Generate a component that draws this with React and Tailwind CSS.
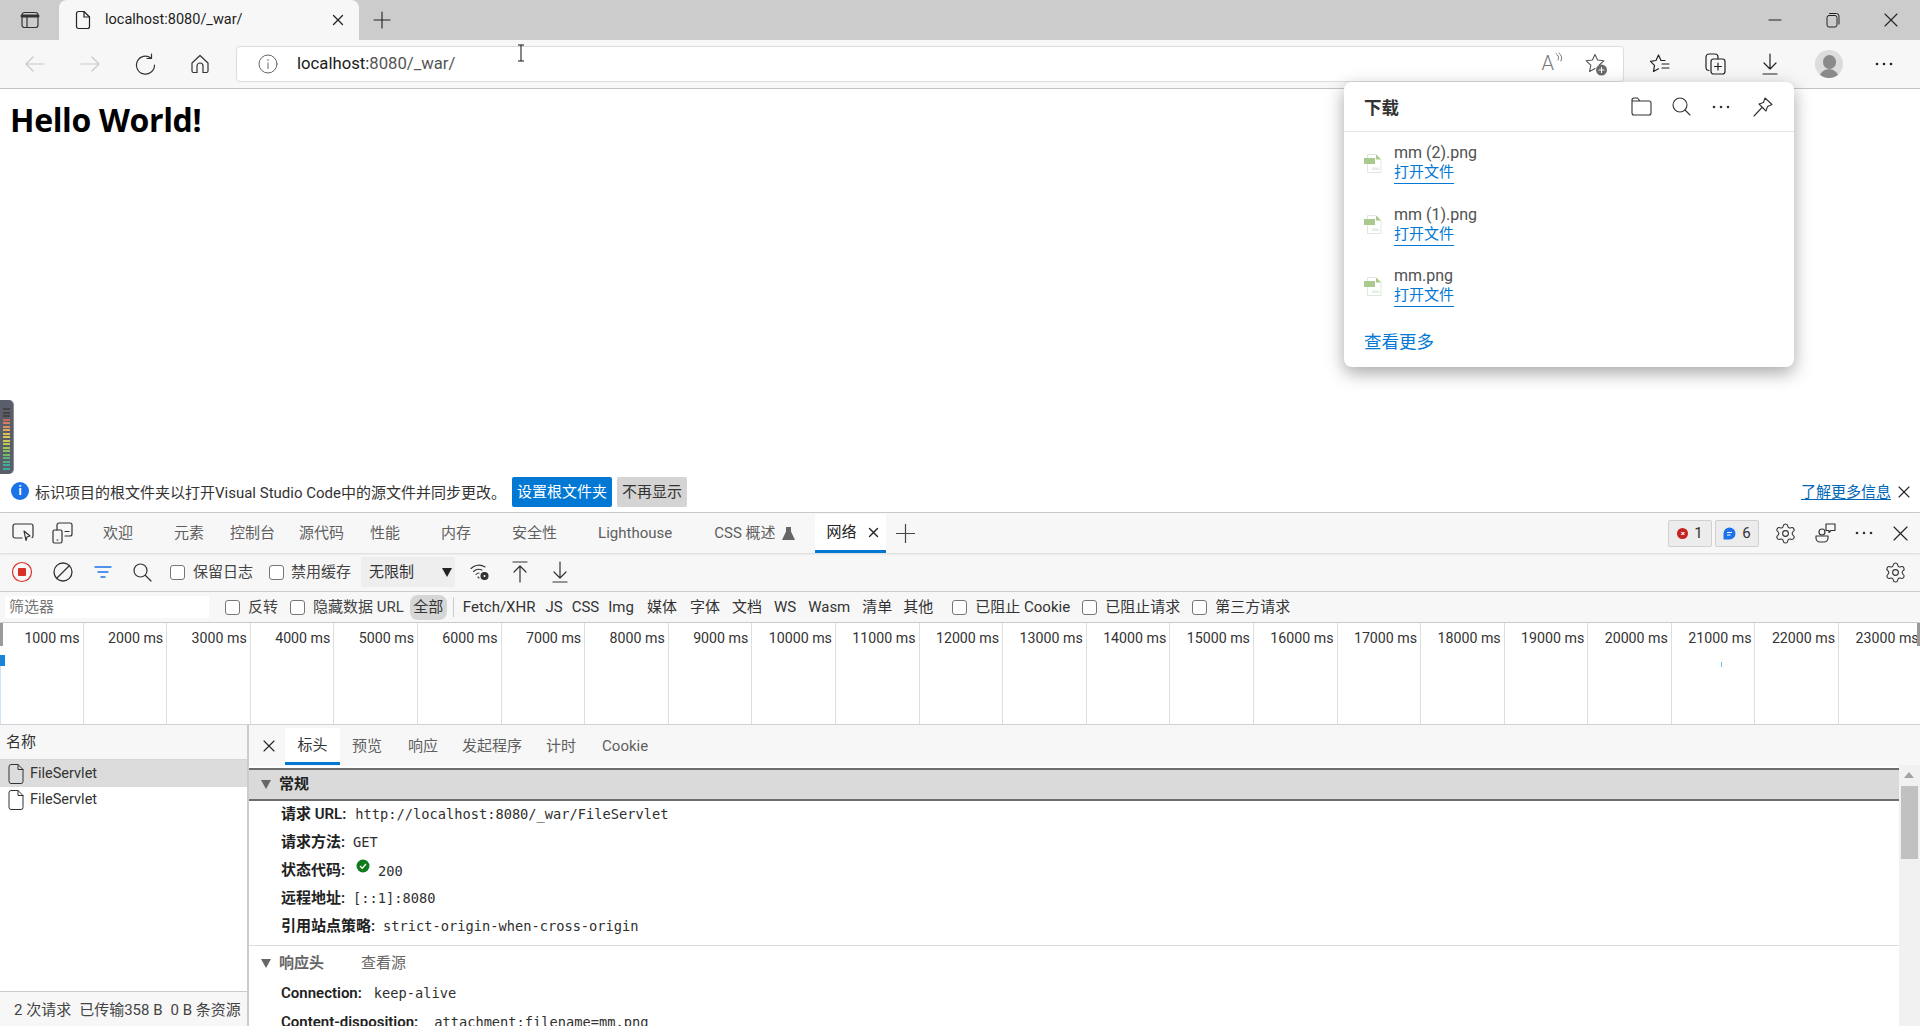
import React from "react";
import { Settings } from "lucide-react";

const S = ({ w = 20, h = 20, vb = "0 0 20 20", c = "#333", sw = 1.2, className = "", children }) => (
  <svg width={w} height={h} viewBox={vb} fill="none" stroke={c} strokeWidth={sw} strokeLinecap="round" strokeLinejoin="round" className={"shrink-0 " + className}>{children}</svg>
);

const Cb = ({ className = "" }) => <span className={"inline-block shrink-0 w-[15px] h-[15px] rounded-[3px] border border-[#767676] bg-white " + className} />;

const PngIcon = () => (
  <svg width="18" height="19" viewBox="0 0 18 19" className="shrink-0">
    <path d="M3.5 .5H12L17 5.5V18.500H3.500Z" fill="#fff" stroke="#dfe8da" />
    <path d="M12 .5V5.500H17Z" fill="#a9c98e" />
    <rect x="0" y="4" width="11" height="6" fill="#a9c98e" />
    <path d="M7 16L10 12.500L12 14L14 13L16 16Z" fill="#e3efe6" />
  </svg>
);

const Dots = ({ c = "#333" }) => (
  <svg width="18" height="4" viewBox="0 0 18 4" className="shrink-0"><circle cx="2" cy="2" r="1.300" fill={c} /><circle cx="9" cy="2" r="1.300" fill={c} /><circle cx="16" cy="2" r="1.300" fill={c} /></svg>
);

const downloads = [
  { name: "mm (2).png", cls: "h-[62px]" },
  { name: "mm (1).png", cls: "h-[61px]" },
  { name: "mm.png", cls: "h-[62px]" },
];

const devTabs = [
  ["欢迎", "ml-[30px]"], ["元素", "ml-[41px]"], ["控制台", "ml-[26px]"], ["源代码", "ml-[24px]"], ["性能", "ml-[26px]"], ["内存", "ml-[41px]"], ["安全性", "ml-[41px]"], ["Lighthouse", "ml-[41px]"],
];

const filters = [["Fetch/XHR", "ml-[9px]"], ["JS", "ml-[10px]"], ["CSS", "ml-[9px]"], ["Img", "ml-[9px]"], ["媒体", "ml-[13px]"], ["字体", "ml-[13px]"], ["文档", "ml-[12px]"], ["WS", "ml-[12px]"], ["Wasm", "ml-[12px]"], ["清单", "ml-[12px]"], ["其他", "ml-[11px]"]];

const ticks = Array.from({ length: 23 }, (_, i) => (i + 1) * 1000);

const Row = ({ label, children, className = "", gap = "mr-[8px]" }) => (
  <div className={"flex items-center h-[28px] pl-[281px] " + className}>
    <span className={"font-semibold text-[#222] " + gap}>{label}</span>
    <span className="font-['DejaVu_Sans_Mono',monospace] text-[13.700px] text-[#303030]">{children}</span>
  </div>
);

const Tri = () => <span className="inline-block w-0 h-0 border-l-[5.500px] border-r-[5.500px] border-t-[9px] border-l-transparent border-r-transparent border-t-[#666]" />;

export default function App() {
  return (
    <div className="relative w-[1920px] h-[1026px] overflow-hidden flex flex-col bg-white text-[15px] text-[#303030] font-['Roboto','Noto_Sans_CJK_SC',sans-serif]">
      {/* tab strip */}
      <div className="h-10 shrink-0 bg-[#cccccc] flex items-stretch">
        <div className="w-[59px] flex items-center justify-center">
          <S w={20} h={20}><rect x="2" y="2.500" width="16" height="15" rx="2.500" /><path d="M2 6H18" strokeWidth="3" /><path d="M7 6V17" /></S>
        </div>
        <div className="w-[300px] bg-[#f7f7f7] rounded-t-[8px] flex items-center pl-[16px] pr-[8px]">
          <S w={16} h={20} vb="0 0 16 20" c="#222"><path d="M1.500 3.500a2 2 0 0 1 2-2H9L14.500 7V16.500a2 2 0 0 1-2 2h-9a2 2 0 0 1-2-2Z" /><path d="M9 1.500V7H14.500" /></S>
          <span className="ml-[14px] text-[14.500px] text-[#1d1d1d]">localhost:8080/_war/</span>
          <S w={12} h={12} vb="0 0 12 12" c="#222" sw={1.300} className="ml-auto mr-[7px]"><path d="M1.500 1.500L10.500 10.500M10.500 1.500L1.500 10.500" /></S>
        </div>
        <div className="ml-[14px] flex items-center">
          <S w={18} h={18} vb="0 0 18 18" c="#222" sw={1.100}><path d="M9 1V17M1 9H17" /></S>
        </div>
        <div className="ml-auto flex items-center">
          <S w={14} h={14} vb="0 0 14 14" c="#222" sw={1}><path d="M1 7H13" /></S>
          <S w={14} h={16} vb="0 0 14 16" c="#222" sw={1} className="ml-[44px]"><rect x="1" y="3.500" width="10" height="11.500" rx="2" /><path d="M3.500 1.500H10.500a2.500 2.500 0 0 1 2.500 2.500V12" /></S>
          <S w={14} h={14} vb="0 0 14 14" c="#222" sw={1.100} className="ml-[44px] mr-[22px]"><path d="M1 1L13 13M13 1L1 13" /></S>
        </div>
      </div>

      {/* toolbar */}
      <div className="h-[49px] shrink-0 bg-[#f7f7f7] border-b border-[#c4c4c4] flex items-center">
        <S w={20} h={18} vb="0 0 20 18" c="#c8c8c8" className="ml-[25px]"><path d="M1 9H19M1 9L8 2M1 9L8 16" /></S>
        <S w={20} h={18} vb="0 0 20 18" c="#c8c8c8" className="ml-[35px]"><path d="M1 9H19M19 9L12 2M19 9L12 16" /></S>
        <S w={21} h={22} vb="0 0 21 22" c="#333" sw={1.200} className="ml-[35px]"><path d="M16 5A9 9 0 1 0 19.500 12" /><path d="M16.500 1V5.500H12" /></S>
        <S w={20} h={20} vb="0 0 20 20" c="#333" sw={1.200} className="ml-[34px]"><path d="M2 9L10 1.500L18 9V17a1.500 1.500 0 0 1-1.500 1.500H13V12a3 3 0 0 0-6 0V18.500H3.500A1.500 1.500 0 0 1 2 17Z" /></S>
        <div className="ml-[26px] w-[1388px] h-[36px] bg-white rounded-[4px] border border-[#dcdcdc] flex items-center shrink-0">
          <S w={20} h={20} vb="0 0 20 20" c="#666" sw={1} className="ml-[21px]"><circle cx="10" cy="10" r="9" /><path d="M10 9V14.500M10 5.500V6.500" /></S>
          <span className="ml-[19px] text-[16.700px] text-[#555]"><span className="text-[#1a1a1a]">localhost:</span>8080/_war/</span>
          <span className="ml-auto text-[20px] leading-none text-[#777] font-light -mt-[2px]">A</span>
          <S w={10} h={16} vb="0 0 10 16" c="#777" sw={1} className="-mt-[8px]"><path d="M2 1.500Q6 4.500 4 8M5 1Q9 4 7 9" /></S>
          <S w={24} h={24} vb="0 0 24 24" c="#555" sw={1.100} className="ml-[20px] mr-[15px]"><path d="M15.300 13L19.800 8.800L13.600 8L11 2.500L8.400 8L2.200 8.800L6.800 13.200L5.600 19.500L11 16.600" /><circle cx="17.500" cy="18" r="5.500" fill="#6b6b6b" stroke="none" /><path d="M17.500 15.500V20.500M15 18H20" stroke="#fff" /></S>
        </div>
        <S w={22} h={22} vb="0 0 22 22" c="#222" sw={1.200} className="ml-[25px]"><path d="M16 7.500H12L9.500 2L7 7.500L1.500 8.300L5.500 12.300L4.500 18.500L9.500 15.800" /><path d="M13 11H20M13 15H20" /></S>
        <S w={22} h={24} vb="0 0 22 24" c="#222" sw={1.200} className="ml-[33px]"><rect x="7" y="7" width="14" height="15" rx="2.500" /><path d="M14 11V18M10.500 14.500H17.500" /><path d="M5 18.500A3 3 0 0 1 2 16V5A3 3 0 0 1 5 2H11A3 3 0 0 1 14 5V7" /></S>
        <S w={16} h={24} vb="0 0 16 24" c="#222" sw={1.200} className="ml-[36px]"><path d="M8 2V17M2 11L8 17L14 11M1 22H15" /></S>
        <div className="ml-[37px] w-[28px] h-[28px] rounded-full bg-[#dcdcdc] overflow-hidden relative shrink-0">
          <span className="absolute left-[7.500px] top-[5px] w-[13px] h-[14px] rounded-full bg-[#8a8a8a]" />
          <span className="absolute left-[4px] top-[19px] w-[20px] h-[14px] rounded-t-[10px] bg-[#8a8a8a]" />
        </div>
        <div className="ml-[32px]"><Dots c="#222" /></div>
      </div>

      {/* page */}
      <div className="h-[423px] shrink-0 flex flex-col bg-white">
        <div className="flex-1 min-h-0">
          <h1 className="ml-[10px] mt-[9px] text-[32px] leading-[44px] font-bold text-black font-['Open_Sans',sans-serif] tracking-[-0.350px]">Hello World!</h1>
        </div>
        <div className="h-[35px] shrink-0 flex items-start">
          <span className="ml-[11px] mt-[5px] w-[18px] h-[18px] rounded-full bg-[#1a73e8] flex items-center justify-center text-white text-[12px] font-bold leading-none">i</span>
          <span className="ml-[6px] mt-[5px] text-[15px] leading-[22px] text-[#333]">标识项目的根文件夹以打开Visual Studio Code中的源文件并同步更改。</span>
          <span className="absolute left-[512px] top-[477px] w-[100px] h-[30px] bg-[#0078d4] rounded-[2px] text-white flex items-center justify-center">设置根文件夹</span>
          <span className="absolute left-[617px] top-[477px] w-[70px] h-[30px] bg-[#d4d4d4] rounded-[2px] text-[#333] flex items-center justify-center">不再显示</span>
          <span className="ml-auto mt-[4px] text-[#0067b8] underline underline-offset-2 text-[15px]">了解更多信息</span>
          <S w={12} h={12} vb="0 0 12 12" c="#222" sw={1.100} className="ml-[7px] mr-[10px] mt-[9px]"><path d="M1 1L11 11M11 1L1 11" /></S>
        </div>
      </div>

      {/* devtools */}
      <div className="flex-1 min-h-0 flex flex-col bg-[#f7f7f7] border-t border-[#cbcbcb] text-[#444]">
        <div className="h-[40px] shrink-0 flex items-center shadow-[0_1px_2px_rgba(0,0,0,0.12)] relative">
          <S w={22} h={20} vb="0 0 22 20" c="#333" sw={1.200} className="ml-[12px]"><path d="M10 15H3a2 2 0 0 1-2-2V3a2 2 0 0 1 2-2H19a2 2 0 0 1 2 2V13a2 2 0 0 1-1 1.700" /><path d="M12 8L18 13L15 14L14 17.500Z" /></S>
          <S w={21} h={22} vb="0 0 21 22" c="#333" sw={1.200} className="ml-[18px]"><rect x="1" y="8" width="9" height="13" rx="1.500" /><path d="M5 8V3a2 2 0 0 1 2-2H18a2 2 0 0 1 2 2V12a2 2 0 0 1-2 2H13M13 9.500H17M5 18H6" /></S>
          {devTabs.map(([t, m]) => <span key={t} className={"text-[#5f5f5f] " + m}>{t}</span>)}
          <span className="ml-[42px] text-[#5f5f5f]">CSS 概述</span>
          <svg width="13" height="15" viewBox="0 0 13 15" className="ml-[6px] shrink-0"><path d="M4 1H9V5.500L13 14H0L4 5.500Z" fill="#666" /></svg>
          <div className="ml-[20px] w-[71px] h-[39px] mt-[1px] bg-white border-b-[3px] border-[#0078d4] flex items-center pl-[12px]">
            <span className="text-[#222]">网络</span>
            <S w={11} h={11} vb="0 0 11 11" c="#222" sw={1.400} className="ml-[11px]"><path d="M1.500 1.500L9.500 9.500M9.500 1.500L1.500 9.500" /></S>
          </div>
          <S w={19} h={19} vb="0 0 19 19" c="#444" sw={1.200} className="ml-[10px]"><path d="M9.500 0V19M0 9.500H19" /></S>
          <div className="ml-auto h-[27px] w-[44px] bg-[#ececec] border border-[#d0d0d0] rounded-[2px] flex items-center justify-center gap-[6px]">
            <span className="w-[11px] h-[11px] rounded-full bg-[#c5221f] text-white text-[8px] leading-[11px] text-center font-bold">×</span><span className="text-[#333]">1</span>
          </div>
          <div className="ml-[3px] h-[27px] w-[44px] bg-[#ececec] border border-[#d0d0d0] rounded-[2px] flex items-center justify-center gap-[6px]">
            <svg width="13" height="13" viewBox="0 0 13 13" className="shrink-0"><path d="M6.500 0.500A6 6 0 1 1 6.500 12.500H0.500V6.500A6 6 0 0 1 6.500 0.500Z" fill="#1a73e8" /><path d="M4 5.500H9M4 8H7.500" stroke="#fff" /></svg><span className="text-[#333]">6</span>
          </div>
          <Settings size={23} strokeWidth={1.150} color="#333" className="ml-[15px] shrink-0" />
          <S w={21} h={20} vb="0 0 21 20" c="#333" sw={1.150} className="ml-[18px]"><circle cx="7" cy="9" r="3" /><path d="M1 13H13V15A4 4 0 0 1 9 19H5A4 4 0 0 1 1 15Z" /><path d="M11 1H20V7.500H16L14 9.500V7.500H11Z" /></S>
          <div className="ml-[19px]"><Dots c="#333" /></div>
          <S w={15} h={15} vb="0 0 15 15" c="#222" sw={1.150} className="ml-[20px] mr-[12px]"><path d="M1 1L14 14M14 1L1 14" /></S>
        </div>
        <div className="h-[39px] shrink-0 flex items-center border-b border-[#cbcbcb]">
          <svg width="22" height="22" viewBox="0 0 22 22" className="ml-[11px] shrink-0"><circle cx="11" cy="11" r="9.500" fill="none" stroke="#d93025" strokeWidth="1.200" /><rect x="7" y="7" width="8" height="8" rx="1" fill="#d93025" /></svg>
          <S w={20} h={20} vb="0 0 20 20" c="#333" sw={1.300} className="ml-[20px]"><circle cx="10" cy="10" r="9" /><path d="M3.500 16.500L16.500 3.500" /></S>
          <S w={18} h={14} vb="0 0 18 14" c="#1a73e8" sw={1.300} className="ml-[21px]"><path d="M1 2H17M4 7H14M7 12H11" /></S>
          <S w={19} h={19} vb="0 0 19 19" c="#333" sw={1.200} className="ml-[21px]"><circle cx="7.500" cy="7.500" r="6.500" /><path d="M12.500 12.500L18 18" /></S>
          <Cb className="ml-[18px]" /><span className="ml-[8px]">保留日志</span>
          <Cb className="ml-[16px]" /><span className="ml-[7px]">禁用缓存</span>
          <div className="ml-[10px] w-[94px] h-[30px] bg-[#eeeeee] flex items-center pl-[8px]">
            <span className="text-[#333]">无限制</span>
            <span className="ml-[28px] w-0 h-0 border-l-[5.500px] border-r-[5.500px] border-t-[9px] border-l-transparent border-r-transparent border-t-[#222]" />
          </div>
          <S w={20} h={20} vb="0 0 20 20" c="#333" sw={1.100} className="ml-[15px]"><path d="M1 6.500A11 11 0 0 1 15 5M3.500 9.500A8 8 0 0 1 12 8M6 12.500A4 4 0 0 1 9 11M8 15L9 16" /><circle cx="14.500" cy="14" r="3.500" fill="#333" /><circle cx="14.500" cy="14" r="1" fill="#fff" stroke="none" /></S>
          <S w={16} h={22} vb="0 0 16 22" c="#333" sw={1.200} className="ml-[22px]"><path d="M1 1H15M8 21V5M2 11L8 5L14 11" /></S>
          <S w={16} h={22} vb="0 0 16 22" c="#333" sw={1.200} className="ml-[24px]"><path d="M1 21H15M8 1V17M2 11L8 17L14 11" /></S>
          <Settings size={23} strokeWidth={1.150} color="#333" className="ml-auto mr-[13px] shrink-0" />
        </div>
        <div className="h-[31px] shrink-0 flex items-center border-b border-[#cbcbcb] leading-[24px]">
          <div className="ml-[5px] w-[204px] h-[22px] bg-white text-[#757575] pl-[4px] leading-[22px]">筛选器</div>
          <Cb className="ml-[16px]" /><span className="ml-[8px]">反转</span>
          <Cb className="ml-[12px]" /><span className="ml-[8px]">隐藏数据 URL</span>
          <span className="ml-[6px] w-[37px] h-[25px] rounded-[8px] bg-[#d6d6d6] text-center leading-[25px] text-[#333]">全部</span>
          <span className="ml-[6px] w-px h-[20px] bg-[#cccccc]" />
          {filters.map(([t, m]) => <span key={t} className={"text-[#333] " + m}>{t}</span>)}
          <Cb className="ml-[19px]" /><span className="ml-[8px] text-[#333]">已阻止 Cookie</span>
          <Cb className="ml-[12px]" /><span className="ml-[8px] text-[#333]">已阻止请求</span>
          <Cb className="ml-[12px]" /><span className="ml-[8px] text-[#333]">第三方请求</span>
        </div>
        {/* overview */}
        <div className="h-[102px] shrink-0 bg-white border-b border-[#cfcfd6] flex relative overflow-hidden">
          {ticks.map((t) => (
            <div key={t} className="w-[83.600px] shrink-0 border-r border-[#dedede] pr-[3px] pt-[5px] text-right text-[14.200px] leading-[20px] text-[#333] whitespace-nowrap">{t} ms</div>
          ))}
          <span className="absolute left-0 top-0 w-[3px] h-[23px] bg-[#9a9a9a]" />
          <span className="absolute left-0 top-[32px] w-[5px] h-[11px] bg-[#1a84d8]" />
          <span className="absolute left-0 top-[43px] w-px h-[58px] bg-[#cfe4f5]" />
          <span className="absolute left-[1721px] top-[39px] w-px h-[5px] bg-[#5cc4e8]" />
          <span className="absolute right-0 top-0 w-[3px] h-[23px] bg-[#9a9a9a]" />
        </div>
        {/* main */}
        <div className="flex-1 min-h-0 flex">
          <div className="w-[249px] shrink-0 flex flex-col bg-white border-r-[2px] border-[#cbcbd2]">
            <div className="h-[35px] shrink-0 bg-[#f7f7f7] flex items-center pl-[6px] border-b border-[#d6d6d6] text-[#333]">名称</div>
            <div className="h-[27px] shrink-0 bg-[#dcdcdc] flex items-center pl-[8px]">
              <S w={16} h={20} vb="0 0 16 20" c="#333" sw={1}><path d="M1 2.500a2 2 0 0 1 2-2H10L15 5.500V17.500a2 2 0 0 1-2 2H3a2 2 0 0 1-2-2Z" /><path d="M10 .5V5.500H15" /></S>
              <span className="ml-[6px] text-[#333] text-[14.500px]">FileServlet</span>
            </div>
            <div className="h-[26px] shrink-0 flex items-center pl-[8px]">
              <S w={16} h={20} vb="0 0 16 20" c="#333" sw={1}><path d="M1 2.500a2 2 0 0 1 2-2H10L15 5.500V17.500a2 2 0 0 1-2 2H3a2 2 0 0 1-2-2Z" /><path d="M10 .5V5.500H15" /></S>
              <span className="ml-[6px] text-[#333] text-[14.500px]">FileServlet</span>
            </div>
            <div className="flex-1" />
            <div className="h-[35px] shrink-0 bg-[#f7f7f7] border-t border-[#cbcbcb] flex items-center pl-[14px] pt-[3px] text-[#444] whitespace-nowrap text-[15px]">2 次请求<span className="ml-[8px]">已传输358 B</span><span className="ml-[8px]">0 B 条资源</span></div>
          </div>
          <div className="flex-1 min-w-0 flex flex-col relative">
            <div className="h-[41px] shrink-0 flex items-center">
              <S w={12} h={12} vb="0 0 12 12" c="#222" sw={1.100} className="ml-[14px]"><path d="M1 1L11 11M11 1L1 11" /></S>
              <div className="ml-[10px] w-[55px] h-[37px] mt-[2px] bg-white border-b-[3px] border-[#0078d4] flex items-center justify-center text-[#333]">标头</div>
              <span className="ml-[12px] mt-[2px] text-[#5f5f5f]">预览</span>
              <span className="ml-[26px] mt-[2px] text-[#5f5f5f]">响应</span>
              <span className="ml-[24px] mt-[2px] text-[#5f5f5f]">发起程序</span>
              <span className="ml-[24px] mt-[2px] text-[#5f5f5f]">计时</span>
              <span className="ml-[26px] mt-[2px] text-[#5f5f5f]">Cookie</span>
            </div>
            <div className="flex-1 min-h-0 flex bg-white">
              <div className="flex-1 min-w-0 overflow-hidden">
                <div className="mt-[2px] h-[33px] bg-[#dadada] border-y-[2px] border-[#6e6e6e] flex items-center pl-[12px] gap-[8px]">
                  <Tri /><span className="font-semibold text-[#222]">常规</span>
                </div>
                <div className="-ml-[249px] -mt-[1px]">
                  <Row label="请求 URL:" gap="mr-[9px]">http://localhost:8080/_war/FileServlet</Row>
                  <Row label="请求方法:">GET</Row>
                  <Row label="状态代码:">
                    <span className="inline-flex items-center"><svg width="14" height="14" viewBox="0 0 14 14" className="-mt-[7px] mr-[8px] ml-[3px]"><circle cx="7" cy="7" r="6.500" fill="#0f7b1b" /><path d="M4 7L6.200 9.200L10 5" stroke="#fff" strokeWidth="1.300" fill="none" /></svg><span className="mt-[3px]">200</span></span>
                  </Row>
                  <Row label="远程地址:">[::1]:8080</Row>
                  <Row label="引用站点策略:">strict-origin-when-cross-origin</Row>
                </div>
                <div className="h-px bg-[#dcdcdc] mt-[5px]" />
                <div className="h-[33px] pt-[1px] flex items-center pl-[12px] gap-[8px]">
                  <Tri /><span className="font-semibold text-[#666]">响应头</span><span className="ml-[29px] text-[#666]">查看源</span>
                </div>
                <div className="-ml-[249px]">
                  <Row label="Connection:" gap="mr-[12px]">keep-alive</Row>
                  <Row label="Content-disposition:" className="mt-[1px]" gap="mr-[16px]">attachment;filename=mm.png</Row>
                </div>
              </div>
              <div className="w-[21px] shrink-0 bg-[#f1f1f1] relative -mt-px">
                <span className="absolute left-[5px] top-[7px] w-0 h-0 border-l-[5px] border-r-[5px] border-b-[6px] border-l-transparent border-r-transparent border-b-[#a3a3a3]" />
                <span className="absolute left-[2px] top-[21px] w-[17px] h-[73px] bg-[#c1c1c1]" />
              </div>
            </div>
          </div>
        </div>
      </div>

      {/* audio meter widget */}
      <div className="absolute left-0 top-[400px] w-[14px] h-[74px] rounded-r-[5px] bg-[#5a5e6b] border-r border-[#8b8e98] flex flex-col items-start pl-[3px] pt-[8px] gap-[1.500px]">
        {["#444","#444","#444","#c9695b","#d4805a","#d8955a","#dcaa58","#dfbc55","#dcc750","#ccc94e","#b8c94f","#a3c652","#8dc15a","#74bb66","#5db676","#4cb087","#43ab96","#3da89f"].map((c, i) => (
          <span key={i} className="w-[7px] h-[2px]" style={{ background: c }} />
        ))}
      </div>

      {/* I-beam cursor */}
      <svg width="10" height="18" viewBox="0 0 10 18" className="absolute left-[516px] top-[44px]"><path d="M2 1H8M2 17H8M5 1V17" stroke="#111" strokeWidth="1" fill="none" /></svg>

      {/* downloads flyout */}
      <div className="absolute left-[1344px] top-[82px] w-[450px] h-[285px] bg-white rounded-[8px] shadow-[0_6px_18px_rgba(0,0,0,0.35)] flex flex-col">
        <div className="h-[50px] shrink-0 border-b border-[#e6e6e6] flex items-center pl-[20px]">
          <span className="font-bold text-[17.500px] text-[#333] mt-[4px]">下载</span>
          <S w={21} h={19} vb="0 0 21 19" c="#333" sw={1.100} className="ml-auto"><path d="M1 3a2 2 0 0 1 2-2H6.500L9 4H18a2 2 0 0 1 2 2V16a2 2 0 0 1-2 2H3a2 2 0 0 1-2-2ZM1 4H9" /></S>
          <S w={19} h={19} vb="0 0 19 19" c="#333" sw={1.100} className="ml-[20px]"><circle cx="8" cy="8" r="7" /><path d="M13 13L18 18" /></S>
          <div className="ml-[21px]"><Dots c="#333" /></div>
          <S w={20} h={20} vb="0 0 20 20" c="#333" sw={1.100} className="ml-[23px] mr-[21px]"><path d="M12 1L19 7.500L14.500 9.500L13 14L6 7L10.500 5.500ZM9 10.500L1 19" /></S>
        </div>
        <div className="flex flex-col">
          {downloads.map((d) => (
            <div key={d.name} className={"flex items-center pl-[20px] " + d.cls}>
              <PngIcon />
              <div className="ml-[12px] flex flex-col items-start">
                <span className="mt-[1px] text-[16px] leading-[20px] text-[#505050]">{d.name}</span>
                <span className="text-[15px] leading-[19px] text-[#0078d4] border-b border-[#0078d4] pb-[1px]">打开文件</span>
              </div>
            </div>
          ))}
        </div>
        <span className="ml-[20px] mt-[12px] text-[17.500px] leading-[26px] text-[#0078d4]">查看更多</span>
      </div>
    </div>
  );
}
